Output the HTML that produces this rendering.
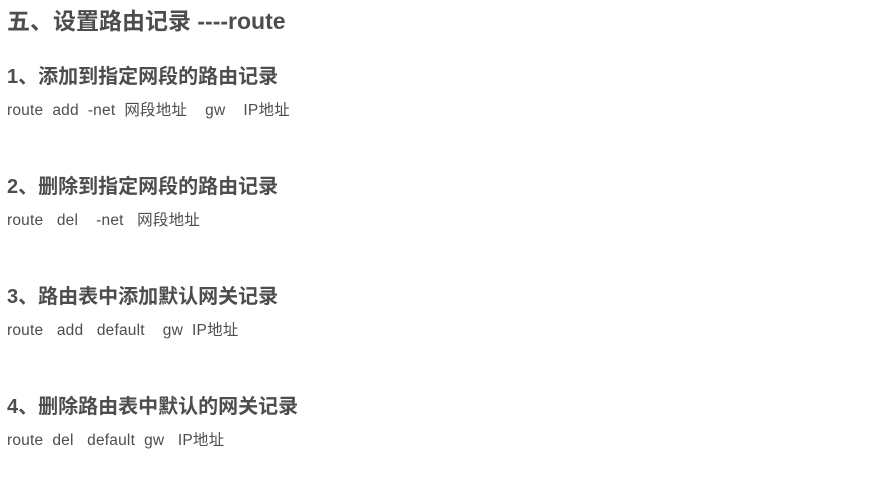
<!DOCTYPE html>
<html><head><meta charset="utf-8"><style>
body{margin:0;background:#fff;color:#4d4d4d;font-family:"Liberation Sans","Noto Sans CJK SC",sans-serif;width:879px;height:501px;overflow:hidden;position:relative}
div{position:absolute;left:7px;white-space:pre;line-height:1}
.t{font-size:23px;font-weight:bold;top:10px}
.h{font-size:20px;font-weight:bold}
.p{font-size:15.5px;letter-spacing:0.2px}
</style></head><body>
<div class="t">五、设置路由记录 ----route</div>
<div class="h" style="top:67px">1、添加到指定网段的路由记录</div>
<div class="p" style="top:103px">route  add  -net  网段地址    gw    IP地址</div>
<div class="h" style="top:177px">2、删除到指定网段的路由记录</div>
<div class="p" style="top:213px">route   del    -net   网段地址</div>
<div class="h" style="top:287px">3、路由表中添加默认网关记录</div>
<div class="p" style="top:323px">route   add   default    gw  IP地址</div>
<div class="h" style="top:397px">4、删除路由表中默认的网关记录</div>
<div class="p" style="top:433px">route  del   default  gw   IP地址</div>
</body></html>
